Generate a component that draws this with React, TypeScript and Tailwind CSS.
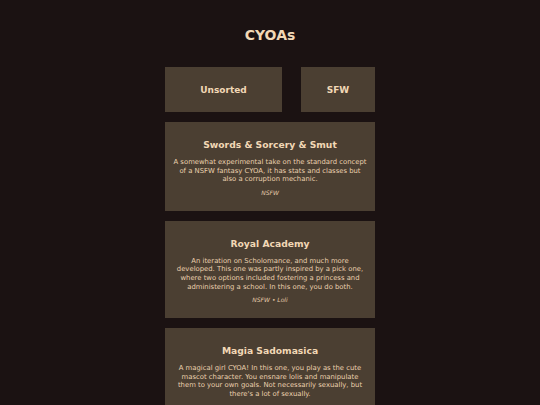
const cyoas = [
  {
    title: 'Swords & Sorcery & Smut',
    desc: 'A somewhat experimental take on the standard concept of a NSFW fantasy CYOA, it has stats and classes but also a corruption mechanic.',
    tags: ['NSFW'],
  },
  {
    title: 'Royal Academy',
    desc: 'An iteration on Scholomance, and much more developed. This one was partly inspired by a pick one, where two options included fostering a princess and administering a school. In this one, you do both.',
    tags: ['NSFW', 'Loli'],
  },
  {
    title: 'Magia Sadomasica',
    desc: "A magical girl CYOA! In this one, you play as the cute mascot character. You ensnare lolis and manipulate them to your own goals. Not necessarily sexually, but there's a lot of sexually.",
    tags: ['Technically SFW', 'Loli'],
  },
]

export default function App() {
  return (
    <div
      className="min-h-[405px] bg-[#1b1212] text-[#f2d8b6]"
      style={{ fontFamily: '"DejaVu Sans", Verdana, sans-serif' }}
    >
      <div className="mx-auto w-[210px] pt-[25px]">
        <h1 className="mb-[22px] text-center text-[14px] font-bold leading-[20px]">
          CYOAs
        </h1>

        <div className="mb-[10px] flex justify-between">
          <button className="h-[45px] w-[117px] bg-[#4b3f32] pt-[3px] text-[9px] font-bold text-[#f2d8b6]">
            Unsorted
          </button>
          <button className="h-[45px] w-[74px] bg-[#4b3f32] pt-[3px] text-[9px] font-bold text-[#f2d8b6]">
            SFW
          </button>
        </div>

        <div className="flex flex-col gap-[10px]">
          {cyoas.map((c) => (
            <div
              key={c.title}
              className="bg-[#4b3f32] px-[8px] pt-[16px] pb-[14px] text-center"
            >
              <h2 className="text-[9.2px] font-bold leading-[14px]">{c.title}</h2>
              <p className="mt-[6px] text-[6.85px] leading-[8.6px] text-[#ead0ae]">
                {c.desc}
              </p>
              <p className="mt-[5px] text-[6px] italic leading-[8px] text-[#e3c9a8]">
                {c.tags.join(' • ')}
              </p>
            </div>
          ))}
        </div>
      </div>
    </div>
  )
}
